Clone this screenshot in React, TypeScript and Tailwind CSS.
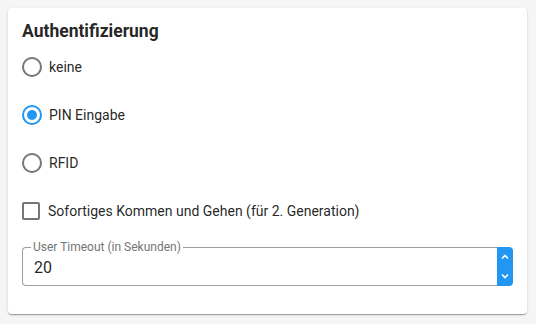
import React from "react";

const Radio = ({ checked }: { checked?: boolean }) => (
  <span
    className={
      "flex h-5 w-5 items-center justify-center rounded-full border-2 " +
      (checked ? "border-[#2196f3]" : "border-[#757575]")
    }
  >
    {checked && <span className="h-[10px] w-[10px] rounded-full bg-[#2196f3]" />}
  </span>
);

const App = () => {
  const options = [
    { label: "keine", checked: false },
    { label: "PIN Eingabe", checked: true },
    { label: "RFID", checked: false },
  ];

  return (
    <div className="min-h-[324px] bg-[#f5f5f5] p-2 font-['Roboto',sans-serif] text-[rgba(0,0,0,0.87)]">
      <div className="h-[306px] w-[519px] rounded bg-white px-[14px] pt-3 shadow-[0_2px_1px_-1px_rgba(0,0,0,0.2),0_1px_1px_0_rgba(0,0,0,0.14),0_1px_3px_0_rgba(0,0,0,0.12)]">
        <h2 className="text-[17.5px] font-bold leading-[23px]">Authentifizierung</h2>

        {/* Radio group */}
        <div className="flex flex-col">
          {options.map((o) => (
            <label key={o.label} className="flex h-12 items-center gap-[7px]">
              <Radio checked={o.checked} />
              <span className="text-[14px]">{o.label}</span>
            </label>
          ))}
          <label className="flex h-12 items-center gap-2">
            <span className="h-[18px] w-[18px] rounded-[2px] border-2 border-[#757575]" />
            <span className="text-[14px]">Sofortiges Kommen und Gehen (für 2. Generation)</span>
          </label>
        </div>

        {/* Outlined number field */}
        <div className="mt-3 flex h-[39px]">
          <div className="relative flex flex-1 items-center rounded-l border border-r-0 border-[#9e9e9e] pl-[11px] pt-[2px]">
            <span className="absolute -top-[8px] left-[8px] bg-white px-[2px] text-[12px] leading-[14px] text-[#757575]">
              User Timeout (in Sekunden)
            </span>
            <span className="text-[16px] leading-[20px]">20</span>
          </div>
          <div className="flex w-4 flex-col items-center justify-between rounded-r bg-[#2196f3] py-[5px] text-white">
            <svg width="10" height="10" viewBox="0 0 10 10" fill="none" stroke="currentColor" strokeWidth="1.6">
              <path d="M2 6.5 L5 3.5 L8 6.5" />
            </svg>
            <svg width="10" height="10" viewBox="0 0 10 10" fill="none" stroke="currentColor" strokeWidth="1.6">
              <path d="M2 3.5 L5 6.5 L8 3.5" />
            </svg>
          </div>
        </div>
      </div>
    </div>
  );
};

export default App;
